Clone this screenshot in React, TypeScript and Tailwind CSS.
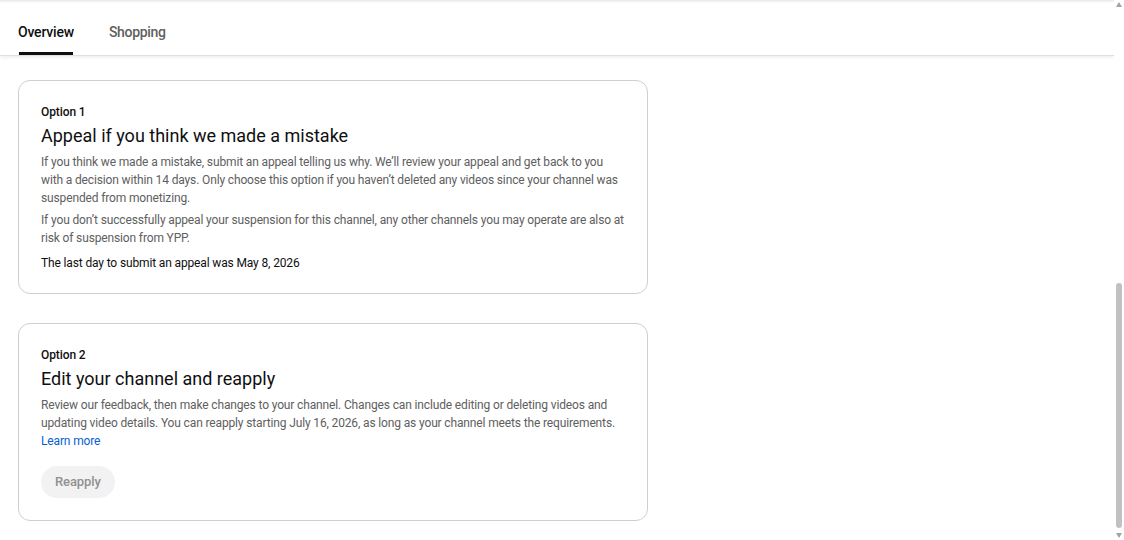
import React from "react";

export default function App() {
  return (
    <div className="flex h-[540px] w-[1124px] overflow-hidden bg-white" style={{ fontFamily: "Roboto, 'Liberation Sans', sans-serif" }}>
      <div className="flex flex-1 flex-col">
        <div className="h-[3px] bg-gradient-to-b from-[#e8e8e8] to-white" />
        <div className="flex h-[53px] items-end gap-[35px] border-b border-[#e0e0e0] px-[18px] shadow-[0_2px_3px_rgba(0,0,0,0.06)]">
          <div className="flex h-full flex-col items-center justify-between">
            <div className="pt-[19px] text-[14px] font-medium leading-[20px] tracking-[-0.2px] text-[#0f0f0f]">Overview</div>
            <div className="h-[3px] w-[54px] bg-[#0f0f0f]" />
          </div>
          <div className="flex h-full flex-col">
            <div className="pt-[19px] text-[14px] font-medium leading-[20px] tracking-[-0.3px] text-[#606060]">Shopping</div>
          </div>
        </div>
        <div className="flex flex-col gap-[29px] px-[18px] pt-[24px]">
          <div className="w-[630px] rounded-[12px] border border-[#cfcfcf] px-[22px] pb-[21px] pt-[22px]">
            <div className="text-[12px] font-medium leading-[18px] tracking-[-0.1px] text-[#0f0f0f]">Option 1</div>
            <div className="mt-[2px] text-[18px] leading-[26px] text-[#0f0f0f]">Appeal if you think we made a mistake</div>
            <p className="mt-[4px] text-[12px] leading-[18px] tracking-[-0.14px] text-[#606060]">
              If you think we made a mistake, submit an appeal telling us why. We’ll review your appeal and get back to you with a decision within 14 days. Only choose this option if you haven’t deleted any videos since your channel was suspended from monetizing.
            </p>
            <p className="mt-[4px] text-[12px] leading-[18px] tracking-[-0.14px] text-[#606060]">
              If you don’t successfully appeal your suspension for this channel, any other channels you may operate are also at risk of suspension from YPP.
            </p>
            <p className="mt-[7px] text-[12px] leading-[18px] tracking-[-0.14px] text-[#0f0f0f]">The last day to submit an appeal was May 8, 2026</p>
          </div>
          <div className="w-[630px] rounded-[12px] border border-[#cfcfcf] px-[22px] pb-[22px] pt-[22px]">
            <div className="text-[12px] font-medium leading-[18px] tracking-[-0.1px] text-[#0f0f0f]">Option 2</div>
            <div className="mt-[2px] text-[18px] leading-[26px] text-[#0f0f0f]">Edit your channel and reapply</div>
            <p className="mt-[4px] text-[12px] leading-[18px] tracking-[-0.14px] text-[#606060]">
              Review our feedback, then make changes to your channel. Changes can include editing or deleting videos and updating video details. You can reapply starting July 16, 2026, as long as your channel meets the requirements.
            </p>
            <div className="text-[12px] leading-[18px] tracking-[-0.14px] text-[#065fd4]">Learn more</div>
            <div className="mt-[16px] flex">
              <div className="flex h-[32px] items-center rounded-full bg-[#f2f2f2] px-[14px] text-[13px] font-medium tracking-[-0.1px] text-[#909090]">Reapply</div>
            </div>
          </div>
        </div>
      </div>
      <div className="relative w-[10px] bg-white">
        <div className="absolute left-[2px] top-[2px] h-0 w-0 border-x-[3px] border-b-[5px] border-x-transparent border-b-[#a3a3a3]" />
        <div className="absolute left-[2px] top-[283px] h-[245px] w-[6px] rounded-full bg-[#c1c1c1]" />
        <div className="absolute bottom-[2px] left-[2px] h-0 w-0 border-x-[3px] border-t-[5px] border-x-transparent border-t-[#a3a3a3]" />
      </div>
    </div>
  );
}
